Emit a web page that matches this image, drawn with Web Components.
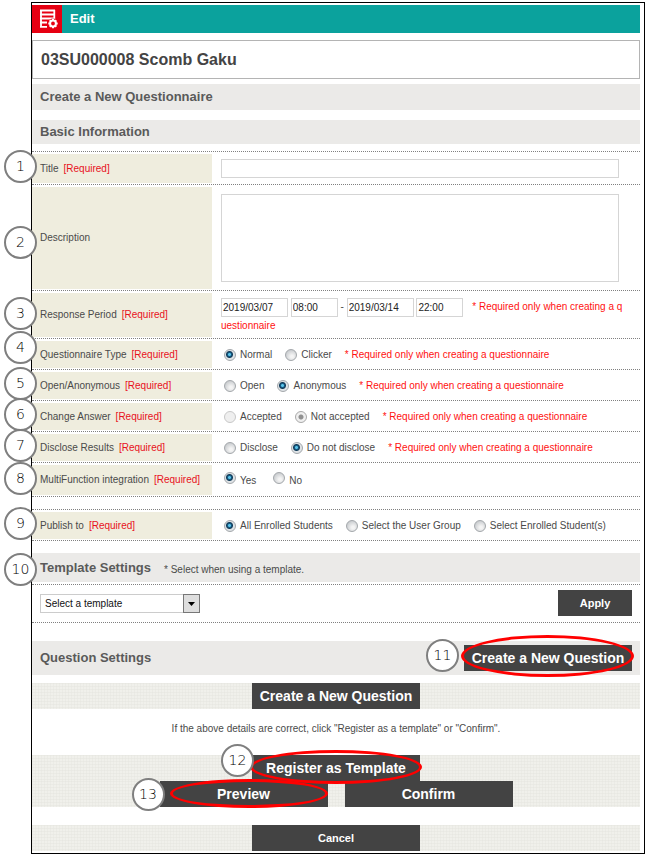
<!DOCTYPE html>
<html lang="en">
<head>
<meta charset="utf-8">
<title>Create a New Questionnaire</title>
<style>
  body {
    margin: 0;
    background: #fff;
    color: #4a4a4a;
    font: 10px/18px "Liberation Sans", Arial, sans-serif;
  }
</style>
</head>
<body>
<questionnaire-page>
  <edit-bar>Edit</edit-bar>
  <course-title>03SU000008 Scomb Gaku</course-title>
  <section-bar size="medium" heading="Create a New Questionnaire"></section-bar>
  <section-bar size="small" heading="Basic Information"></section-bar>

  <row-group>
    <text-row pin="1" label="Title"></text-row>
    <text-row pin="2" pin-place="low" label="Description" multiline></text-row>
    <period-row pin="3" label="Response Period"></period-row>
    <choice-row pin="4" pin-place="high" label="Questionnaire Type" options="Normal|Clicker" checked="0" note></choice-row>
    <choice-row pin="5" label="Open/Anonymous" options="Open|Anonymous" checked="1" note></choice-row>
    <choice-row pin="6" label="Change Answer" options="Accepted|Not accepted" checked="1" locked note></choice-row>
    <choice-row pin="7" label="Disclose Results" options="Disclose|Do not disclose" checked="1" note></choice-row>
    <choice-row pin="8" label="MultiFunction integration" options="Yes|No" checked="0" roomy></choice-row>
  </row-group>

  <row-group>
    <choice-row pin="9" label="Publish to" options="All Enrolled Students|Select the User Group|Select Enrolled Student(s)" checked="0"></choice-row>
  </row-group>

  <section-bar size="large" heading="Template Settings" pin="10">* Select when using a template.</section-bar>
  <template-picker></template-picker>

  <section-bar size="xlarge" heading="Question Settings">
    <action-button slot="action" pin="11" ring="wide">Create a New Question</action-button>
  </section-bar>

  <button-band>
    <action-button>Create a New Question</action-button>
  </button-band>
  <hint-text>If the above details are correct, click "Register as a template" or "Confirm".</hint-text>
  <button-band>
    <action-button pin="12" ring="snug">Register as Template</action-button>
  </button-band>
  <button-band>
    <action-button pin="13" ring="inner">Preview</action-button>
    <action-button>Confirm</action-button>
  </button-band>
  <button-band spaced>
    <action-button small>Cancel</action-button>
  </button-band>
</questionnaire-page>

<script>
const NOTE = "* Required only when creating a questionnaire";

// step number in a circle, sits over the left edge of its owner
class StepPin extends HTMLElement {
  constructor() {
    super();
    const shadow = this.attachShadow({ mode: "open" });
    shadow.innerHTML = `
      <style>
        :host {
          position: absolute;
          z-index: 2;
          box-sizing: border-box;
          width: 33px;
          height: 33px;
          border: 2px solid #7f7f7f;
          border-radius: 50%;
          background: #fff;
          color: #000;
          font: 200 14px/29px "DejaVu Sans", Verdana, sans-serif;
          text-align: center;
        }
      </style>
      <slot></slot>
    `;
  }
}

class QuestionnairePage extends HTMLElement {
  constructor() {
    super();
    const shadow = this.attachShadow({ mode: "open" });
    shadow.innerHTML = `
      <style>
        :host {
          display: block;
          padding: 2px 4px 2px 31px;
        }
        main {
          border: 1px solid #000;
          padding: 2px 4px 2px 0;
        }
      </style>
      <main><slot></slot></main>
    `;
  }
}

class EditBar extends HTMLElement {
  constructor() {
    super();
    const shadow = this.attachShadow({ mode: "open" });
    shadow.innerHTML = `
      <style>
        :host {
          display: flex;
          align-items: center;
          height: 28px;
          gap: 8px;
          background: #0ba29d;
          color: #fff;
          font-size: 13px;
          font-weight: bold;
        }
        .icon {
          display: block;
          width: 30px;
          height: 28px;
          background: #e60012;
        }
      </style>
      <svg class="icon" viewBox="0 0 30 28" fill="none" stroke="#fff" aria-hidden="true">
        <path d="M8 5.500H23M8 9.500H23M8 13.500H23M9 5V22.500M22.300 5V14M8 17.500H15M8 21.800H15" stroke-width="1.800"/>
        <circle cx="21" cy="18.500" r="5" fill="#e60012" stroke="none"/>
        <circle cx="21" cy="18.500" r="2.900" stroke-width="2"/>
        <path d="M21 13.800V15.500M21 21.500V23.200M16.300 18.500H18M24 18.500H25.700M17.700 15.200L18.900 16.400M23.100 20.600L24.300 21.800M24.300 15.200L23.100 16.400M18.900 20.600L17.700 21.800" stroke-width="2"/>
      </svg>
      <slot></slot>
    `;
  }
}

class CourseTitle extends HTMLElement {
  constructor() {
    super();
    const shadow = this.attachShadow({ mode: "open" });
    shadow.innerHTML = `
      <style>
        :host { display: block; margin-top: 7px; }
        h1 {
          margin: 0;
          padding: 0 8px;
          border: 1px solid #b4b4b4;
          color: #444;
          font-size: 16px;
          line-height: 37px;
        }
      </style>
      <h1><slot></slot></h1>
    `;
  }
}

class SectionBar extends HTMLElement {
  constructor() {
    super();
    const pin = this.getAttribute("pin");
    const shadow = this.attachShadow({ mode: "open" });
    shadow.innerHTML = `
      <style>
        :host {
          position: relative;
          display: flex;
          align-items: center;
          gap: 13px;
          box-sizing: border-box;
          padding: 0 8px;
          background: #ebeae8;
        }
        :host([size="medium"]) { min-height: 26px; margin-top: 5px; }
        :host([size="small"]) { min-height: 24px; margin: 10px 0 7px; }
        :host([size="large"]) { min-height: 29px; margin: 11px 0 2px; }
        :host([size="xlarge"]) { min-height: 34px; margin: 18px 0 8px; }
        h2 {
          margin: 0;
          color: #5a5a5a;
          font-size: 13px;
        }
        .note { padding-top: 4px; }
        ::slotted([slot="action"]) { margin-left: auto; }
        step-pin { left: -28px; top: calc(50% - 15px); }
      </style>
      ${pin ? `<step-pin>${pin}</step-pin>` : ""}
      <h2>${this.getAttribute("heading")}</h2>
      <span class="note"><slot></slot></span>
      <slot name="action"></slot>
    `;
  }
}

class RowGroup extends HTMLElement {
  constructor() {
    super();
    const shadow = this.attachShadow({ mode: "open" });
    shadow.innerHTML = `
      <style>
        :host {
          display: block;
          margin-bottom: 12px;
          border-bottom: 1px dotted #808080;
        }
      </style>
      <slot></slot>
    `;
  }
}

// label cell and value cell, subclasses fill in the value
class FormRow extends HTMLElement {
  constructor() {
    super();
    this.label = this.getAttribute("label");
    this.required = !this.hasAttribute("multiline");
    const shadow = this.attachShadow({ mode: "open" });
    shadow.innerHTML = `
      <style>
        :host {
          position: relative;
          display: grid;
          grid-template-columns: 180px 1fr;
          padding: 2px 0 1px;
          border-top: 1px dotted #808080;
        }
        .name {
          display: flex;
          align-items: center;
          gap: 5px;
          padding-left: 8px;
          background: #efedde;
          white-space: nowrap;
        }
        .required { color: #e8111c; }
        .note { color: #f11; }
        .value {
          display: flex;
          flex-wrap: wrap;
          align-items: center;
          gap: 0 13px;
          box-sizing: border-box;
          min-height: 27px;
          padding-left: 9px;
        }
        input, textarea {
          box-sizing: border-box;
          margin: 0;
          padding: 0 1px;
          border: 1px solid #d5d5d5;
          background: #fff;
          color: #222;
          font: inherit;
        }
        step-pin { left: -28px; top: calc(50% - 18px); }
        :host([pin-place="low"]) step-pin { top: calc(50% - 12px); }
        :host([pin-place="high"]) step-pin { top: calc(50% - 23px); }
        ${this.styles()}
      </style>
      <step-pin>${this.getAttribute("pin")}</step-pin>
      ${this.nameCell()}
      <div class="value" ${this.valueAttrs()}>${this.content()}</div>
    `;
  }

  styles() { return ""; }
  valueAttrs() { return ""; }
  content() { return ""; }

  nameText() {
    return `<span>${this.label}</span>${this.required ? '<span class="required">[Required]</span>' : ""}`;
  }

  nameCell() {
    return `<div class="name" id="name">${this.nameText()}</div>`;
  }
}

class TextRow extends FormRow {
  styles() {
    return `
      .value { padding-top: 5px; padding-bottom: 5px; }
      .value > * { width: 95%; }
      input { height: 19px; }
      :host([multiline]) .value { padding-top: 7px; padding-bottom: 7px; }
      textarea { height: 88px; resize: none; }
    `;
  }

  nameCell() {
    return `<label class="name" for="field">${this.nameText()}</label>`;
  }

  content() {
    return this.hasAttribute("multiline")
      ? '<textarea id="field"></textarea>'
      : '<input id="field" type="text">';
  }
}

class PeriodRow extends FormRow {
  styles() {
    return `
      .value {
        display: block;
        min-height: 44px;
        padding: 5px 14px 2px 9px;
        line-height: 17px;
        word-break: break-all;
      }
      input { height: 19px; vertical-align: middle; }
      .date { width: 67px; }
      .time { width: 47px; }
      .note { margin-left: 6px; }
    `;
  }

  valueAttrs() { return 'role="group" aria-labelledby="name"'; }

  content() {
    return `
      <input class="date" type="text" aria-label="Start date" value="2019/03/07">
      <input class="time" type="text" aria-label="Start time" value="08:00">
      -
      <input class="date" type="text" aria-label="End date" value="2019/03/14">
      <input class="time" type="text" aria-label="End time" value="22:00">
      <span class="note">${NOTE}</span>
    `;
  }
}

class ChoiceRow extends FormRow {
  styles() {
    return `
      .value { padding-left: 12px; }
      label {
        display: flex;
        align-items: center;
        gap: 4px;
      }
      input {
        appearance: none;
        width: 12px;
        height: 12px;
        padding: 0;
        border: 1px solid #a3a7ab;
        border-radius: 50%;
        background: radial-gradient(circle at 60% 65%, #f4f4f4 15%, #c9cccf 75%);
      }
      input:checked {
        background: radial-gradient(circle at 45% 45%, #59c3ea 0 1px, #16587f 2px, #123c5a 3px, #dfe3e6 4px);
      }
      input:disabled { border-color: #c8c8c8; background: #efefef; }
      input:disabled:checked {
        border-color: #a8a8a8;
        background: radial-gradient(circle, #909090 0 2px, #efefef 3px);
      }
      :host([roomy]) .value { min-height: 30px; column-gap: 17px; }
      :host([roomy]) label { align-items: flex-start; }
      :host([roomy]) label span { padding-top: 2px; line-height: 14px; }
    `;
  }

  valueAttrs() { return 'role="radiogroup" aria-labelledby="name"'; }

  content() {
    const checked = parseInt(this.getAttribute("checked"));
    const disabled = this.hasAttribute("locked") ? "disabled" : "";
    const radios = this.getAttribute("options").split("|").map((option, i) => `
      <label>
        <input type="radio" name="choice" ${i == checked ? "checked" : ""} ${disabled}>
        <span>${option}</span>
      </label>
    `);
    if (this.hasAttribute("note")) radios.push(`<span class="note">${NOTE}</span>`);
    return radios.join("");
  }
}

class TemplatePicker extends HTMLElement {
  constructor() {
    super();
    const shadow = this.attachShadow({ mode: "open" });
    shadow.innerHTML = `
      <style>
        :host {
          display: flex;
          align-items: center;
          justify-content: space-between;
          padding: 5px 8px 6px;
          border: 1px dotted #808080;
          border-width: 1px 0;
        }
        .picker { position: relative; }
        select {
          appearance: none;
          display: block;
          box-sizing: border-box;
          width: 160px;
          height: 19px;
          padding: 0 20px 0 4px;
          border: 1px solid #ccc;
          border-radius: 0;
          background: #fff;
          color: #111;
          font: inherit;
          line-height: 17px;
        }
        .arrow {
          position: absolute;
          top: 0;
          right: 0;
          pointer-events: none;
        }
      </style>
      <div class="picker">
        <select aria-label="Template">
          <option>Select a template</option>
        </select>
        <svg class="arrow" width="17" height="19" viewBox="0 0 17 19" aria-hidden="true">
          <rect x=".5" y=".5" width="16" height="18" fill="#dedede" stroke="#777"/>
          <path d="M5 8h7l-3.500 4z" fill="#000"/>
        </svg>
      </div>
      <action-button small narrow>Apply</action-button>
    `;
  }
}

class ActionButton extends HTMLElement {
  constructor() {
    super();
    const pin = this.getAttribute("pin");
    const shadow = this.attachShadow({ mode: "open" });
    shadow.innerHTML = `
      <style>
        :host {
          position: relative;
          display: block;
          width: 168px;
        }
        :host([narrow]) { width: 74px; }
        button {
          display: block;
          width: 100%;
          height: 26px;
          padding: 0;
          border: 0;
          background: #434343;
          color: #fff;
          font: bold 14px/26px "Liberation Sans", Arial, sans-serif;
          white-space: nowrap;
          cursor: pointer;
        }
        :host([small]) button { font-size: 11px; }
        .ring {
          position: absolute;
          z-index: 1;
          border: 3px solid #f00;
          border-radius: 50%;
          pointer-events: none;
        }
        :host([ring="wide"]) .ring { inset: -10px -2px -6px -3px; }
        :host([ring="snug"]) .ring { inset: -5px -2px -3px -2px; }
        :host([ring="inner"]) .ring { inset: -2px 0 -1px 10px; }
        step-pin { left: -28px; top: calc(50% - 16px); }
        :host([ring="wide"]) step-pin { left: -38px; top: calc(50% - 19px); }
        :host([ring="snug"]) step-pin { left: -31px; top: calc(50% - 24px); }
      </style>
      <button type="button"><slot></slot></button>
      ${this.hasAttribute("ring") ? '<div class="ring"></div>' : ""}
      ${pin ? `<step-pin>${pin}</step-pin>` : ""}
    `;
  }
}

class ButtonBand extends HTMLElement {
  constructor() {
    super();
    const shadow = this.attachShadow({ mode: "open" });
    shadow.innerHTML = `
      <style>
        :host {
          display: flex;
          justify-content: center;
          gap: 17px;
          background:
            repeating-linear-gradient(90deg, #e4e4de66 0 1px, transparent 1px 3px),
            repeating-linear-gradient(#e2e2dc66 0 1px, transparent 1px 3px),
            #f0f0eb;
        }
        :host([spaced]) { margin-top: 18px; }
      </style>
      <slot></slot>
    `;
  }
}

class HintText extends HTMLElement {
  constructor() {
    super();
    const shadow = this.attachShadow({ mode: "open" });
    shadow.innerHTML = `
      <style>
        :host {
          display: block;
          padding: 11px 0 17px;
          text-align: center;
        }
      </style>
      <slot></slot>
    `;
  }
}

customElements.define("step-pin", StepPin);
customElements.define("questionnaire-page", QuestionnairePage);
customElements.define("edit-bar", EditBar);
customElements.define("course-title", CourseTitle);
customElements.define("section-bar", SectionBar);
customElements.define("row-group", RowGroup);
customElements.define("text-row", TextRow);
customElements.define("period-row", PeriodRow);
customElements.define("choice-row", ChoiceRow);
customElements.define("template-picker", TemplatePicker);
customElements.define("action-button", ActionButton);
customElements.define("button-band", ButtonBand);
customElements.define("hint-text", HintText);
</script>
</body>
</html>
